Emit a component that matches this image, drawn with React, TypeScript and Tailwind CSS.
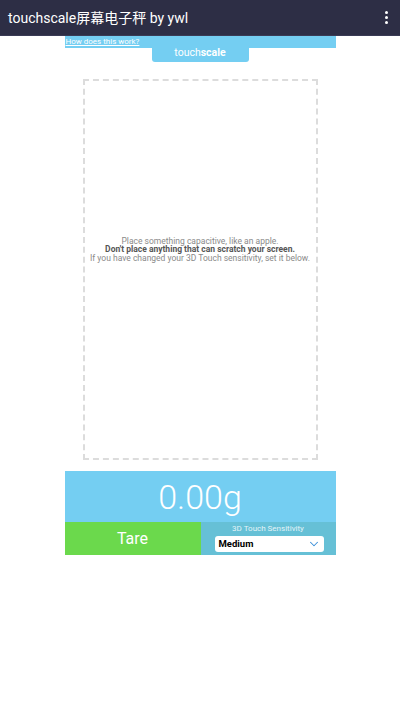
import { ChevronDown } from 'lucide-react'

const FONT = "font-['Roboto','Liberation_Sans','Noto_Sans_CJK_SC',sans-serif]"

function TopBar() {
  return (
    <div className="flex h-[36px] items-center justify-between border-b border-[#3a3b55] bg-[#2d2e45] pl-[8px] pr-[12px]">
      <span className="text-[14px] leading-none text-white">touchscale屏幕电子秤 by ywl</span>
      {/* overflow menu */}
      <div className="flex flex-col gap-[2px]">
        <span className="h-[3px] w-[3px] rounded-full bg-white" />
        <span className="h-[3px] w-[3px] rounded-full bg-white" />
        <span className="h-[3px] w-[3px] rounded-full bg-white" />
      </div>
    </div>
  )
}

function Weight({ grams }: { grams: number }) {
  return (
    <div className="w-full">
      <div className="flex h-[51px] items-center justify-center bg-[#74cef2]">
        <span className="text-[34px] font-light leading-none text-white">{grams.toFixed(2)}g</span>
      </div>
      <div className="flex h-[33px]">
        <div className="flex w-[136px] items-center justify-center bg-[#6bd94c]">
          <span className="text-[16px] leading-none text-white">Tare</span>
        </div>
        <div className="flex flex-1 flex-col items-center bg-[#66c0d6] pt-[3px]">
          <span className="text-[8px] leading-none text-[#e4f4f8]">3D Touch Sensitivity</span>
          <div className="ml-[2px] mt-[3px] flex h-[16px] w-[109px] items-center justify-between rounded-[3px] bg-white pl-[4px] pr-[3px]">
            <span className="text-[9.5px] font-bold leading-none text-black">Medium</span>
            <ChevronDown size={14} strokeWidth={1.8} className="text-[#3a8fd8]" />
          </div>
        </div>
      </div>
    </div>
  )
}

export default function App() {
  return (
    <div className={`h-[710px] w-[400px] bg-white ${FONT}`}>
      <TopBar />
      <div className="mx-auto flex w-[271px] flex-col items-center">
        <div className="h-[12px] w-full bg-[#74cef2] pl-[1px]">
          <a className="block text-[8px] leading-[12px] text-white underline">How does this work?</a>
        </div>
        <div className="flex h-[14px] w-[97px] items-center justify-center rounded-b-[3px] bg-[#74cef2] pb-[3px]">
          <span className="text-[10.5px] leading-none text-white">
            touch<span className="font-bold">scale</span>
          </span>
        </div>

        {/* drop zone */}
        <div className="mt-[17px] flex h-[381px] w-[235px] flex-col items-center justify-center border-[2px] border-dashed border-[#dcdcdc] pb-[40px] text-center text-[8.5px] leading-[8.5px] text-[#8a8a8a]">
          <p>Place something capacitive, like an apple.</p>
          <p className="font-bold text-[#555]">Don't place anything that can scratch your screen.</p>
          <p>If you have changed your 3D Touch sensitivity, set it below.</p>
        </div>

        <div className="mt-[11px] w-full">
          <Weight grams={0} />
        </div>
      </div>
    </div>
  )
}
